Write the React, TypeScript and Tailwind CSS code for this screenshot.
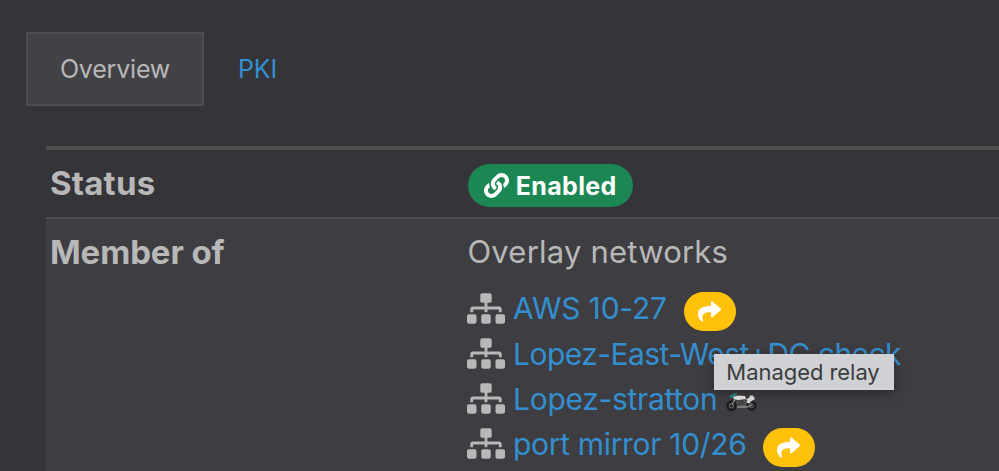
import type { ReactNode } from "react";
import { FaLink, FaShare, FaSitemap } from "react-icons/fa";

function Motorcycle() {
  return (
    <svg width="31" height="21" viewBox="0 0 31 21" className="mt-[14px] ml-[9px]" aria-hidden="true">
      <path d="M7 9 12 7 20 7 24 11 22 17 12 17Z" fill="#48484a" />
      <circle cx="5.5" cy="14.7" r="4.3" fill="#29292b" stroke="#1b1b1c" strokeWidth="1.8" />
      <circle cx="25.5" cy="14.7" r="4.1" fill="#29292b" stroke="#1b1b1c" strokeWidth="1.8" />
      <circle cx="5.5" cy="14.7" r="2.2" fill="none" stroke="#77777a" strokeWidth="0.8" />
      <circle cx="25.5" cy="14.7" r="2" fill="none" stroke="#77777a" strokeWidth="0.8" />
      <path d="m6 14 4-8M11 16h10l5-2" stroke="#8a8a8c" strokeWidth="1.3" fill="none" />
      <path d="M12 10h7l1 5h-6Z" fill="#606063" />
      <path d="M13 11h5M13 13h6" stroke="#242426" strokeWidth="1" />
      <path d="M2.5 6 6 3 11 1.5 10 6 5 7Z" fill="#327f83" />
      <path d="M7 6 12 4.5 19 5 20 8 12 9 8 8Z" fill="#ececec" />
      <path d="M20 8.5 23 7 24 4.5 27 4.5 29 8 24 11Z" fill="#e3e3e3" />
      <circle cx="22.7" cy="10.6" r="1.9" fill="#d5d5d5" />
    </svg>
  );
}

function RelayBadge() {
  return (
    <span className="mt-[6px] ml-[17px] flex h-[39px] w-[52px] shrink-0 items-center justify-center rounded-full bg-[#ffc10a] pr-px text-white">
      <FaShare className="size-[23px]" />
    </span>
  );
}

function Network({ name, width, tracking, children }: { name: string; width: string; tracking: string; children?: ReactNode }) {
  return (
    <li className="flex h-[45.33px] items-start whitespace-nowrap">
      <FaSitemap className="mt-[6.5px] h-[31px] w-[38px] shrink-0 text-[#b8b8b8]" />
      <a className={`ml-[7.7px] shrink-0 pt-[0.4px] text-[30px] leading-[45px] font-[430] text-[#348fcf] ${width} ${tracking}`}>{name}</a>
      {children}
    </li>
  );
}

export default function App() {
  return (
    <div className="relative h-[471px] w-[999px] overflow-hidden bg-[#353439] font-['Inter',sans-serif] text-[#b8b8b8]">
      <nav className="flex pt-8 pl-[26px] text-[25px] font-[430]">
        <a className="flex h-[74px] w-[178px] items-center justify-center border-2 border-[#4e4e4e] bg-[#424145] pt-[2px] tracking-[-0.2px]">Overview</a>
        <a className="flex h-[74px] items-center pt-[2px] pl-[34px] tracking-[-0.1px] text-[#348fcf]">PKI</a>
      </nav>
      <main className="mt-10 ml-[46px] border-t-4 border-[#4e4e4e]">
        <section className="flex h-[67px]">
          <h2 className="w-[422px] pl-1 text-[33px] leading-[66px] font-bold tracking-[0.2px]">Status</h2>
          <span className="mt-[14px] flex h-[43px] w-[165px] items-center rounded-full bg-[#1d8754] pl-4 text-[25px] font-bold text-white">
            <FaLink className="size-[25px]" />
            <span className="ml-[6.8px] pt-[2px] tracking-[0.35px]">Enabled</span>
          </span>
        </section>
        <section className="flex h-[254px] border-t-2 border-[#4e4e4e] bg-[#3e3d41]">
          <h2 className="w-[421.4px] pl-1 text-[33px] leading-[66px] font-bold tracking-[-0.12px]">Member of</h2>
          <div>
            <p className="h-[67px] text-[31px] leading-[66px] font-[430] tracking-[0.22px]">Overlay networks</p>
            <ul>
              <Network name="AWS 10-27" width="w-[154px]" tracking="tracking-[-0.18px]"><RelayBadge /></Network>
              <Network name="Lopez-East-West+DC check" width="w-[390px]" tracking="tracking-[-0.56px]" />
              <Network name="Lopez-stratton" width="w-[204px]" tracking="tracking-[-0.32px]"><Motorcycle /></Network>
              <Network name="port mirror 10/26" width="w-[233px]" tracking="tracking-[-0.33px]"><RelayBadge /></Network>
            </ul>
          </div>
        </section>
      </main>
      <div className="absolute top-[354px] left-[714px] flex h-9 w-[180px] items-center justify-center bg-[#d0d1d5] pr-[2px] text-[22px] tracking-[-0.05px] text-[#3b3c3e] shadow-[0_3px_12px_rgba(0,0,0,0.35)]">Managed relay</div>
    </div>
  );
}
